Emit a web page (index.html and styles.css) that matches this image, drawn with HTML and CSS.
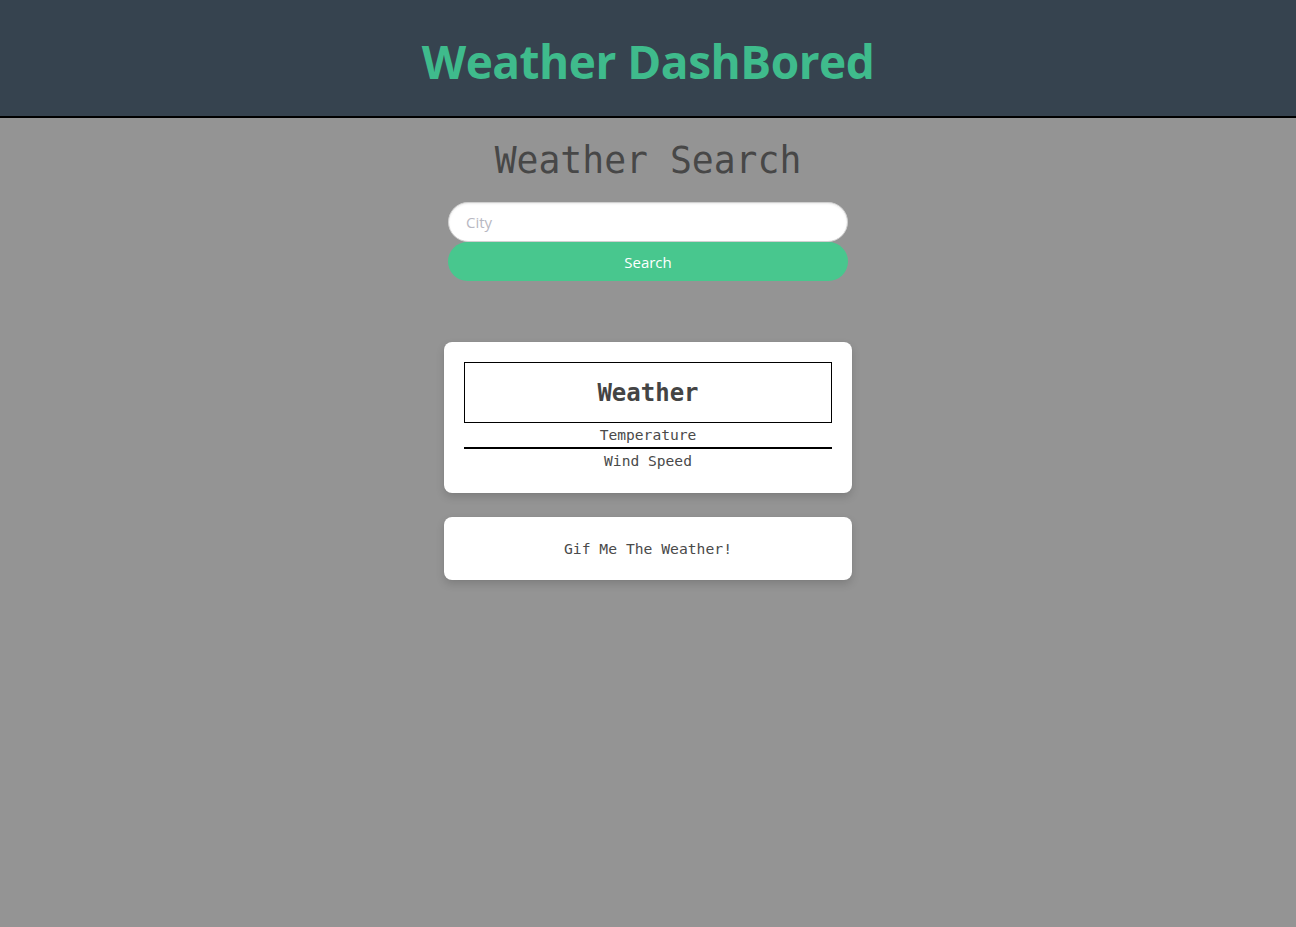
FILE: index.html
```html
<!DOCTYPE html>
<html>
<head>
<meta charset="utf-8">
<link rel="stylesheet" href="styles.css">
</head>
<body>
<header class="hero">
  <h1 class="brand">Weather DashBored</h1>
</header>
<main class="main">
  <h2 class="search-title">Weather Search</h2>
  <div class="search">
    <input class="city" type="text" placeholder="City">
    <button class="btn">Search</button>
  </div>
  <section class="card weather-card">
    <div class="weather-box">Weather</div>
    <div class="stat">Temperature</div>
    <hr class="rule">
    <div class="stat">Wind Speed</div>
  </section>
  <section class="card gif-card">
    <div class="gif">Gif Me The Weather!</div>
  </section>
</main>
</body>
</html>
```
FILE: styles.css
```css
* { box-sizing: border-box; }
html, body { margin: 0; padding: 0; }
body {
  background: #949494;
  font-family: "Open Sans", "Noto Sans", sans-serif;
  min-height: 927px;
}
.hero {
  background: #36434f;
  height: 118px;
  border-bottom: 2px solid #000;
  display: flex;
  align-items: center;
  justify-content: center;
}
.brand {
  margin: 0;
  color: #3fbb8c;
  font-family: "Open Sans", sans-serif;
  font-weight: 700;
  font-size: 46px;
  letter-spacing: -0.5px;
  line-height: 1;
  padding-top: 6px;
}
.main {
  display: flex;
  flex-direction: column;
  align-items: center;
}
.search-title {
  margin: 21px 0 0;
  font-family: "DejaVu Sans Mono", monospace;
  font-weight: 400;
  font-size: 36.4px;
  line-height: 44px;
  color: #474747;
}
.search {
  margin-top: 19px;
  width: 400px;
  display: flex;
  flex-direction: column;
}
.city {
  height: 40px;
  border: 1px solid #d0d0d0;
  border-radius: 20px;
  padding: 0 17px;
  font-family: "Open Sans", sans-serif;
  font-size: 15px;
  background: #fff;
  outline: none;
  box-shadow: inset 0 1px 2px rgba(0,0,0,0.08);
}
.city::placeholder { color: #b8b8c2; }
.btn {
  height: 39px;
  border: none;
  border-radius: 20px;
  background: #48c78e;
  color: #fff;
  font-family: "Open Sans", sans-serif;
  font-size: 15px;
  padding: 0;
}
.card {
  width: 408px;
  background: #fff;
  border-radius: 8px;
  box-shadow: 0 4px 8px rgba(0,0,0,0.15), 0 0 1px rgba(0,0,0,0.1);
  padding: 20px;
  font-family: "DejaVu Sans Mono", monospace;
  color: #4a4a4a;
  text-align: center;
}
.weather-card { margin-top: 61px; }
.weather-box {
  border: 1px solid #000;
  height: 61px;
  display: flex;
  align-items: center;
  justify-content: center;
  font-weight: 700;
  font-size: 24px;
  color: #444;
}
.stat {
  font-size: 14.6px;
  line-height: 24px;
}
.weather-card .stat:first-of-type { margin-top: 1px; }
.rule {
  border: none;
  border-top: 2px solid #000;
  margin: 0;
}
.gif-card {
  margin-top: 24px;
  height: 63px;
  display: flex;
  align-items: center;
  justify-content: center;
  padding-top: 20px;
}
.gif { font-size: 14.7px; }
```
